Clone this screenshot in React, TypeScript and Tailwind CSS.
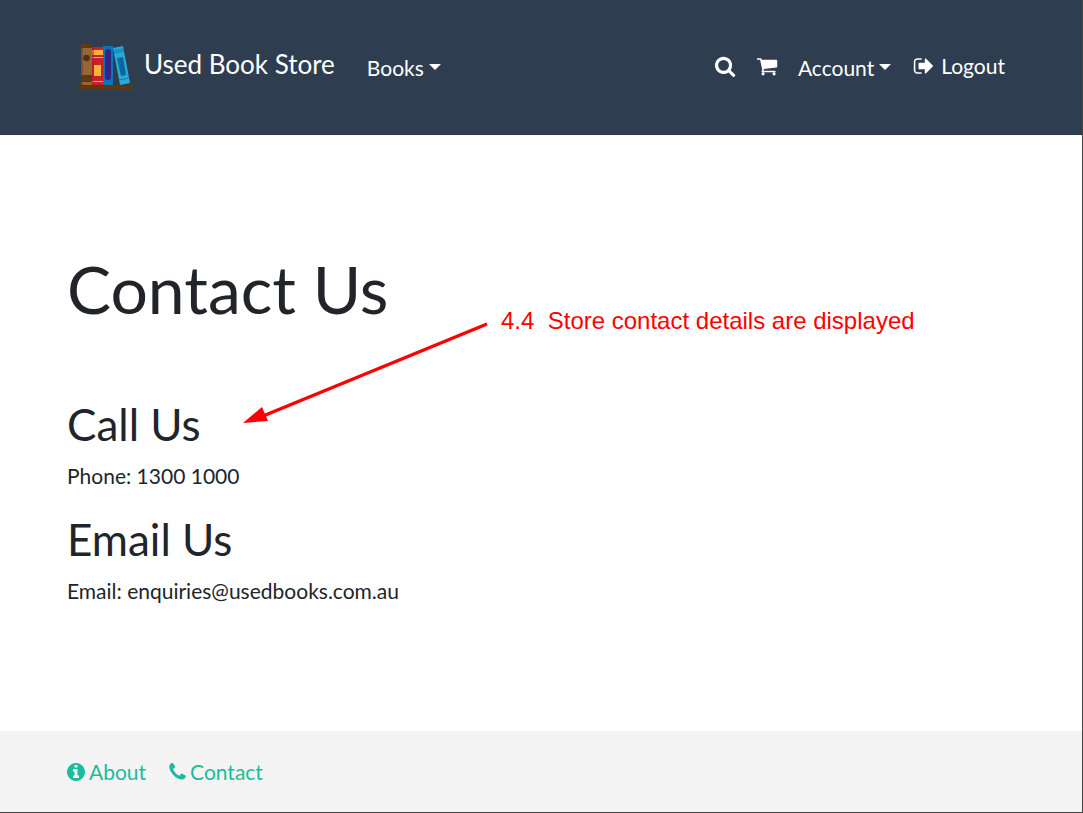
import type { ReactNode } from 'react';

const icons = {
  search:
    'M1216 832q0-185-131.5-316.5t-316.5-131.5-316.5 131.5-131.5 316.5 131.5 316.5 316.5 131.5 316.5-131.5 131.5-316.5zm512 832q0 52-38 90t-90 38q-54 0-90-38l-343-342q-179 124-399 124-143 0-273.5-55.5t-225-150-150-225-55.5-273.5 55.5-273.5 150-225 225-150 273.5-55.5 273.5 55.5 225 150 150 225 55.5 273.5q0 220-124 399l343 343q37 37 37 90z',
  cart: 'M704 1536q0 52-38 90t-90 38-90-38-38-90 38-90 90-38 90 38 38 90zm896 0q0 52-38 90t-90 38-90-38-38-90 38-90 90-38 90 38 38 90zm128-1088v512q0 24-16.5 42.5t-40.5 21.5l-1044 122q13 60 13 70 0 16-24 64h920q26 0 45 19t19 45-19 45-45 19h-1024q-26 0-45-19t-19-45q0-11 8-31.5t16-36 21.5-40 15.5-29.5l-177-823h-204q-26 0-45-19t-19-45 19-45 45-19h256q16 0 28.5 6.5t19.5 15.5 13 24.5 8 26 5.5 29.5 4.5 26h1201q26 0 45 19t19 45z',
  signOut:
    'M704 1440q0 4 1 20t.5 26.5-3 23.5-10 19.5-20.5 6.5h-320q-119 0-203.5-84.5t-84.5-203.5v-704q0-119 84.5-203.5t203.5-84.5h320q13 0 22.5 9.5t9.5 22.5q0 4 1 20t.5 26.5-3 23.5-10 19.5-20.5 6.5h-320q-66 0-113 47t-47 113v704q0 66 47 113t113 47h312l11.5 1 11.5 3 8 5.5 7 9 2 13.5zm928-544q0 26-19 45l-544 544q-19 19-45 19t-45-19-19-45v-288h-448q-26 0-45-19t-19-45v-384q0-26 19-45t45-19h448v-288q0-26 19-45t45-19 45 19l544 544q19 19 19 45z',
  info: 'M1152 1376v-160q0-14-9-23t-23-9h-96v-512q0-14-9-23t-23-9h-320q-14 0-23 9t-9 23v160q0 14 9 23t23 9h96v320h-96q-14 0-23 9t-9 23v160q0 14 9 23t23 9h448q14 0 23-9t9-23zm-128-896v-160q0-14-9-23t-23-9h-192q-14 0-23 9t-9 23v160q0 14 9 23t23 9h192q14 0 23-9t9-23zm640 416q0 209-103 385.5t-279.5 279.5-385.5 103-385.5-103-279.5-279.5-103-385.5 103-385.5 279.5-279.5 385.5-103 385.5 103 279.5 279.5 103 385.5z',
  phone:
    'M1600 1240q0 27-10 70.5t-21 68.5q-21 50-122 106-94 51-186 51-27 0-53-3.5t-57.5-12.5-47-14.5-55.5-20.5-49-18q-98-35-175-83-127-79-264-216t-216-264q-48-77-83-175-3-9-18-49t-20.5-55.5-14.5-47-12.5-57.5-3.5-53q0-92 51-186 56-101 106-122 25-11 68.5-21t70.5-10q14 0 21 3 18 6 53 76 11 19 30 54t35 63.5 31 53.5q3 4 17.5 25t21.5 35.5 7 28.5q0 20-28.5 50t-62 55-62 53-28.5 46q0 9 5 22.5t8.5 20.5 14 24 11.5 19q76 137 174 235t235 174q2 1 19 11.5t24 14 20.5 8.5 22.5 5q18 0 46-28.5t53-62 55-62 50-28.5q14 0 28.5 7t35.5 21.5 25 17.5q25 15 53.5 31t63.5 35 54 30q70 35 76 53 3 7 3 21z',
};

function Icon({ name, viewBox = '0 0 1792 1792', className }: { name: keyof typeof icons; viewBox?: string; className: string }) {
  return (
    <svg aria-hidden="true" viewBox={viewBox} className={className} fill="currentColor">
      <path d={icons[name]} />
    </svg>
  );
}

function Logo() {
  return (
    <svg aria-hidden="true" viewBox="0 0 56 52" className="h-[52px] w-14">
      <path d="M3 4h11v41H3z" fill="#986536" />
      <path d="M3 4h11v4H3zM3 35h11v7H3z" fill="#623812" />
      <path d="M3 8h2v27H3zM3 42h2v3H3z" fill="#7f5029" />
      <circle cx="8.500" cy="18" r="3.200" fill="#54300f" />
      <path d="M14 7h11v38H14z" fill="#c8202d" />
      <path d="M14 10h11v5H14zM16 25h7v11h-7zM14 17h11v1H14zM14 41h11v1H14z" fill="#f7b239" />
      <path d="M14 7h2v38h-2z" fill="#a51d2a" fillOpacity=".5" />
      <path d="M25 6h10v39H25z" fill="#0874bd" />
      <rect x="27" y="9" width="6" height="31" rx="3" fill="#312783" />
      <path d="M35 8l10-2 7 37-10 2z" fill="#29a9d6" />
      <path d="M39 18l6-1 3 18-5 1z" fill="#08679c" />
      <path d="M35.500 11l10-2M36 13l10-2M41 40l10-2" stroke="#087fae" strokeWidth="1" />
      <path d="M0 46h55v4H0z" fill="#60370f" />
    </svg>
  );
}

function Dropdown({ children }: { children: ReactNode }) {
  return (
    <button type="button" aria-haspopup="menu" className="flex items-center gap-[5px] pt-1 leading-8">
      {children}
      <svg aria-hidden="true" viewBox="0 0 12 6" className="mb-0.5 h-1.5 w-3" fill="currentColor">
        <path d="M0 0h12L6 6z" />
      </svg>
    </button>
  );
}

function Header() {
  return (
    <header className="flex h-[135px] items-start justify-between border-b border-[#2c3550] bg-[#2e3e50] pr-[77px] pl-[78px] text-white">
      <div className="flex items-center pt-10">
        <a href="#" className="flex items-center gap-2.5 text-[26px] leading-10">
          <Logo />
          <span className="pb-1">Used Book Store</span>
        </a>
        <nav aria-label="Catalogue" className="ml-8">
          <Dropdown>Books</Dropdown>
        </nav>
      </div>
      <nav aria-label="Account" className="flex items-center pt-12">
        <a href="#search" aria-label="Search">
          <Icon name="search" viewBox="64 64 1728 1728" className="size-[21px]" />
        </a>
        <a href="#cart" aria-label="Cart" className="ml-5">
          <Icon name="cart" className="size-[22px]" />
        </a>
        <div className="ml-5">
          <Dropdown>Account</Dropdown>
        </div>
        <a href="#logout" className="ml-[22px] flex items-center gap-1.5 leading-8">
          <Icon name="signOut" className="size-[22px]" />
          Logout
        </a>
      </nav>
    </header>
  );
}

function Annotation() {
  return (
    <div className="pointer-events-none absolute top-[174px] left-[243px] flex items-start gap-3">
      <svg aria-hidden="true" viewBox="0 0 246 118" className="h-[118px] w-[246px]">
        <path d="M20 107L244 15" stroke="#ff0000" strokeWidth="3.500" />
        <path d="M0 114L19 98L25 112Z" fill="#ff0000" />
      </svg>
      <p className="font-['Liberation_Sans',Arial,sans-serif] text-[24px] leading-6 whitespace-pre text-[#ff0000]">
        {'4.4  Store contact details are displayed'}
      </p>
    </div>
  );
}

export default function App() {
  return (
    <div className="flex min-h-screen flex-col border-r border-b border-[#444] bg-white font-[Lato,sans-serif] text-[21px] leading-8 text-[#212529]">
      <Header />
      <main className="relative grow px-[67px] pt-[114px]">
        <h1 className="text-[66px] leading-20">Contact Us</h1>
        <section className="mt-[69px]">
          <h2 className="text-[44px] leading-[52px]">Call Us</h2>
          <p className="mt-2.5">Phone: 1300 1000</p>
        </section>
        <section className="mt-[21px]">
          <h2 className="text-[44px] leading-[52px]">Email Us</h2>
          <p className="mt-2.5">Email: enquiries@usedbooks.com.au</p>
        </section>
        <Annotation />
      </main>
      <footer className="bg-[#f4f4f4] px-[67px] pt-[25px] pb-6 text-[#1abc9c]">
        <nav aria-label="Footer" className="flex gap-[23px]">
          <a href="#about" className="flex items-center gap-1">
            <Icon name="info" viewBox="128 128 1536 1536" className="size-[18px]" />
            About
          </a>
          <a href="#contact" className="flex items-center gap-1">
            <Icon name="phone" viewBox="192 128 1408 1536" className="h-[18px] w-[17px]" />
            Contact
          </a>
        </nav>
      </footer>
    </div>
  );
}
